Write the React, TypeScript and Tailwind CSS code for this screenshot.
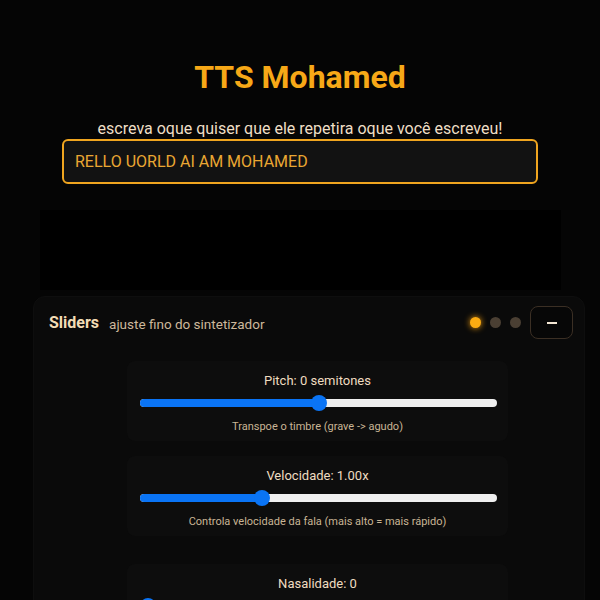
import React from "react";

function Slider({ frac }: { frac: number }) {
  const center = 8 + frac * 341;
  return (
    <div className="relative h-4 w-[357px] ml-[13px]">
      <div className="absolute left-0 right-0 top-1 h-2 rounded-full bg-[#efefef]" />
      <div className="absolute left-0 top-1 h-2 rounded-full bg-[#0a74f5]" style={{ width: center }} />
      <div className="absolute top-0 h-4 w-4 rounded-full bg-[#0a74f5]" style={{ left: center - 8 }} />
    </div>
  );
}

function Card({ label, desc, frac, className = "" }: { label: string; desc?: string; frac: number; className?: string }) {
  return (
    <div className={"w-[381px] rounded-lg bg-[#0d0d0d] pt-[11px] pb-[7px] flex flex-col items-center " + className}>
      <div className="text-[13px] leading-[18px] text-[#efdcc0]">{label}</div>
      <div className="mt-[5px] w-full">
        <Slider frac={frac} />
      </div>
      {desc && <div className="mt-[9px] text-[11px] leading-[14px] text-[#c9b595]">{desc}</div>}
    </div>
  );
}

export default function App() {
  return (
    <div className="h-[600px] overflow-hidden bg-[#050505] pt-[59px]" style={{ fontFamily: "Roboto, 'Noto Sans', sans-serif" }}>
      <h1 className="text-center text-[32px] leading-[36px] font-bold text-[#f7a817]">TTS Mohamed</h1>
      <p className="mt-[24px] text-center text-[16px] leading-[20px] text-[#efdfc6]">escreva oque quiser que ele repetira oque você escreveu!</p>
      <div className="mx-auto w-[476px] h-[45px] rounded-md border-2 border-[#f0a51f] bg-[#121212] flex items-center px-[11px]">
        <span className="text-[16px] text-[#eaa733]">RELLO UORLD AI AM MOHAMED</span>
      </div>
      <div className="mt-[26px] ml-[40px] w-[521px] h-[80px] bg-black" />
      <div className="mt-[6px] ml-[33px] w-[552px] h-[320px] rounded-xl bg-[#0a0a0a] border border-[#0e0e0e] pt-[9px] pl-[15px] pr-[11px]">
        <div className="flex items-center h-[33px]">
          <span className="mt-[1px] text-[16px] font-bold text-[#f3dcb5]">Sliders</span>
          <span className="ml-[10px] mt-[4px] text-[13.5px] text-[#cdb89b]">ajuste fino do sintetizador</span>
          <div className="ml-auto flex items-center gap-[9px]">
            <span className="h-[11px] w-[11px] rounded-full bg-[#fbab12] shadow-[0_0_6px_#f5a00f]" />
            <span className="h-[11px] w-[11px] rounded-full bg-[#4a3f33]" />
            <span className="h-[11px] w-[11px] rounded-full bg-[#4a3f33]" />
            <button className="h-[33px] w-[43px] rounded-lg border border-[#3b2f24] bg-[#070707] flex items-center justify-center">
              <span className="block h-[2px] w-[10px] bg-[#f3e6d3]" />
            </button>
          </div>
        </div>
        <div className="ml-[78px] mt-[22px] flex flex-col">
          <Card label="Pitch: 0 semitones" desc="Transpoe o timbre (grave -> agudo)" frac={0.5} />
          <Card className="mt-[15px]" label="Velocidade: 1.00x" desc="Controla velocidade da fala (mais alto = mais rápido)" frac={1 / 3} />
          <Card className="mt-[28px]" label="Nasalidade: 0" frac={0} />
        </div>
      </div>
    </div>
  );
}
